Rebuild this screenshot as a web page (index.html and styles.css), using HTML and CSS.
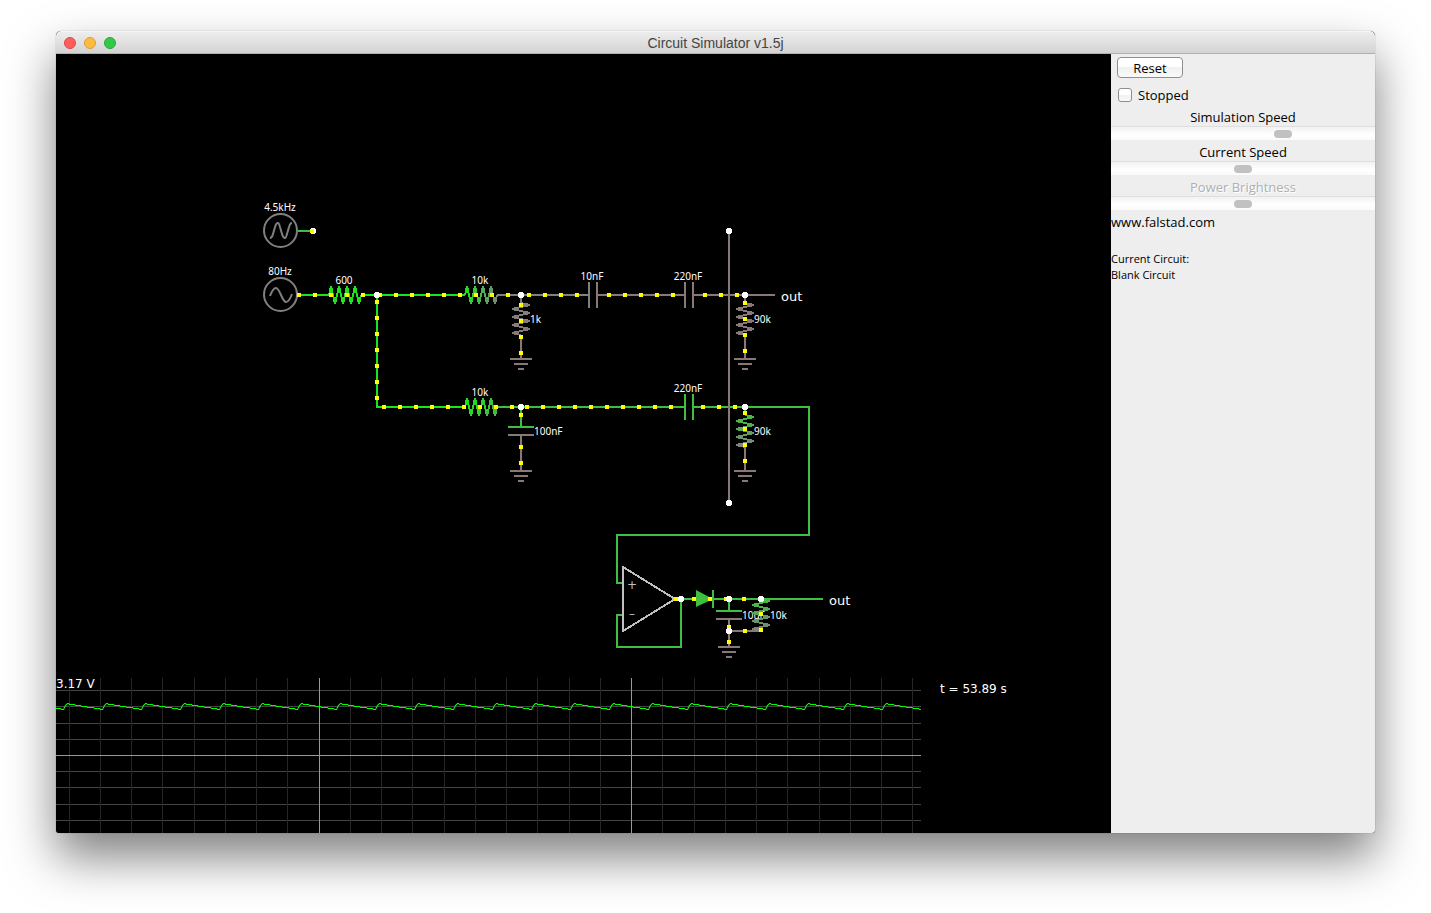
FILE: index.html
```html
<!DOCTYPE html>
<html lang="en">
  <head>
    <meta charset="UTF-8" />
    <meta name="viewport" content="width=device-width, initial-scale=1.0" />
    <title>Circuit Simulator v1.5j</title>
    <link rel="stylesheet" href="styles.css">
  </head>
  <body>
    <div class="window">
      <header class="titlebar">
        <div class="lights">
          <button class="light close" aria-label="Close"></button>
          <button class="light minimize" aria-label="Minimize"></button>
          <button class="light maximize" aria-label="Zoom"></button>
        </div>
        <h1>Circuit Simulator v1.5j</h1>
      </header>
      <main>
        <svg class="circuit" viewBox="56 54 1055 779" role="img" aria-label="Circuit">
          <defs>
            <path id="zigzag" d="M0 0L2 -9L6 9L10 -9L14 9L18 -9L22 9L26 -9L30 9L32 0" />
            <path id="ground" d="M-11 0H11M-7 5H7M-3 10H3" />
            <linearGradient id="fade1">
              <stop offset="0" stop-color="#1be41b" />
              <stop offset="1" stop-color="#7b857b" />
            </linearGradient>
            <linearGradient id="fade2">
              <stop offset="0" stop-color="#1be41b" />
              <stop offset="1" stop-color="#45ba45" />
            </linearGradient>
            <linearGradient id="fade3">
              <stop offset="0" stop-color="#808080" />
              <stop offset="1" stop-color="#8a7878" />
            </linearGradient>
            <linearGradient id="fade4">
              <stop offset="0" stop-color="#3fbf3f" />
              <stop offset="1" stop-color="#808080" />
            </linearGradient>
            <pattern id="ripple" x="56" y="678" width="39" height="155" patternUnits="userSpaceOnUse">
              <path class="trace" d="M0 30.5H5V31.5H8V29.5H9V27.5H10V26.5H11V25.5H13V26.5H19V27.5H25V28.5H31V29.5H38V30.5H39" />
            </pattern>
          </defs>

          <!-- wires -->
          <g class="wire bright">
            <path d="M298 295H329M361 295H465M377 295V407H465" />
          </g>
          <g class="wire green">
            <path d="M298 231H313M497 407H685M521 407V427M508 427H534M685 394V420M693 394V420" />
            <path d="M693 407H809V535H617V583H623M745 407V415" />
            <path d="M675 599H823M681 599V647H617V615H623M713 590V608M729 599V611M716 611H742" />
          </g>
          <g class="wire gray">
            <path d="M497 295H589M521 295V303M589 282V308" />
          </g>
          <g class="wire brown">
            <path d="M597 282V308M597 295H685M685 282V308M693 282V308M693 295H775M745 295V303" />
            <path d="M521 335V359M745 335V359M508 435H534M521 435V471M745 447V471M729 231V503" />
            <path d="M716 619H742M729 619V647M729 631H761" />
            <use href="#ground" x="521" y="359" />
            <use href="#ground" x="745" y="359" />
            <use href="#ground" x="521" y="471" />
            <use href="#ground" x="745" y="471" />
            <use href="#ground" x="729" y="647" />
          </g>

          <!-- component values -->
          <g class="value">
            <g text-anchor="middle">
              <text x="280" y="211">4.5kHz</text>
              <text x="280" y="275">80Hz</text>
              <text x="344" y="284">600</text>
              <text x="480" y="284">10k</text>
              <text x="592" y="280">10nF</text>
              <text x="688" y="280">220nF</text>
              <text x="480" y="396">10k</text>
              <text x="688" y="392">220nF</text>
            </g>
            <text x="530" y="323">1k</text>
            <text x="754" y="323">90k</text>
            <text x="534" y="435">100nF</text>
            <text x="754" y="435">90k</text>
            <text x="742" y="619">10uF</text>
            <text x="770" y="619">10k</text>
          </g>

          <!-- resistors -->
          <g class="resistor">
            <use href="#zigzag" transform="translate(329 295)" stroke="#1be41b" />
            <use href="#zigzag" transform="translate(465 295)" stroke="url(#fade1)" />
            <use href="#zigzag" transform="translate(465 407)" stroke="url(#fade2)" />
            <use href="#zigzag" transform="translate(521 303) rotate(90)" stroke="url(#fade3)" />
            <use href="#zigzag" transform="translate(745 303) rotate(90)" stroke="#8a7878" />
            <use href="#zigzag" transform="translate(745 415) rotate(90)" stroke="url(#fade4)" />
            <use href="#zigzag" transform="translate(761 599) rotate(90)" stroke="url(#fade4)" />
          </g>

          <!-- sources, op-amp, diode -->
          <g class="source">
            <circle cx="280.5" cy="230.5" r="16.5" />
            <path d="M270 238Q272 238 273 234L275 227Q276 223 278 223Q279 223 280 227L282 234Q283 238 285 238Q286 238 287 234L289 227Q290 223 292 223" />
            <circle cx="280.5" cy="294.5" r="16.5" />
            <path d="M270 296Q273 288 276 288Q278 288 281 295Q284 302 286 302Q289 302 292 294" />
          </g>
          <path class="opamp" d="M623 567L675 599L623 631Z" />
          <path class="diode" d="M696 590L713 599L696 607Z" />
          <g class="sign" text-anchor="middle">
            <text x="632" y="589">+</text>
            <text x="632" y="618">–</text>
          </g>

          <!-- moving charge -->
          <g class="charge">
            <path d="M297 295H365M378 295H462M474 295H510M527 295H579M607 295H675M703 295H739" />
            <path d="M377 300V404M382 407H514M525 407H673M701 407H737" />
            <path d="M521 303V355M521 413V417M521 445V465M745 301V353M745 411V463" />
            <path d="M674 599H678M692 599H712M724 599H728M742 599H746" />
            <path d="M761 612V632M743 631H747M729 625V629M729 640V644" />
          </g>

          <g class="node">
            <circle cx="313" cy="231" r="3" />
            <circle cx="377" cy="295" r="3" />
            <circle cx="521" cy="295" r="3" />
            <circle cx="745" cy="295" r="3" />
            <circle cx="521" cy="407" r="3" />
            <circle cx="745" cy="407" r="3" />
            <circle cx="729" cy="231" r="3" />
            <circle cx="729" cy="503" r="3" />
            <circle cx="681" cy="599" r="3" />
            <circle cx="729" cy="599" r="3" />
            <circle cx="761" cy="599" r="3" />
            <circle cx="729" cy="631" r="3" />
          </g>
          <path class="charge" d="M310 231H314" />

          <g class="output">
            <text x="781" y="301">out</text>
            <text x="829" y="605">out</text>
          </g>

          <!-- scope -->
          <g class="scope">
            <path class="row" d="M56 690.5H921M56 706.5H921M56 723.5H921M56 739.5H921M56 771.5H921M56 787.5H921M56 804.5H921M56 820.5H921" />
            <path class="column" d="M69.5 678V833M100.5 678V833M131.5 678V833M162.5 678V833M194.5 678V833M225.5 678V833M256.5 678V833M287.5 678V833M350.5 678V833M381.5 678V833M412.5 678V833M444.5 678V833M475.5 678V833M506.5 678V833M537.5 678V833M569.5 678V833M600.5 678V833M662.5 678V833M694.5 678V833M725.5 678V833M756.5 678V833M787.5 678V833M819.5 678V833M850.5 678V833M881.5 678V833M912.5 678V833" />
            <path class="axis" d="M56 755.5H921M319.5 678V833M631.5 678V833" />
            <rect x="56" y="678" width="865" height="155" fill="url(#ripple)" />
          </g>
          <g class="reading">
            <text x="56" y="688">3.17 V</text>
            <text x="940" y="693">t = 53.89 s</text>
          </g>
        </svg>

        <aside class="controls">
          <button class="reset">Reset</button>
          <label class="stopped"><input type="checkbox" />Stopped</label>
          <div class="slider">
            <label for="speed">Simulation Speed</label>
            <input type="range" id="speed" min="0" max="246" value="163" />
          </div>
          <div class="slider">
            <label for="current">Current Speed</label>
            <input type="range" id="current" min="0" max="100" value="50" />
          </div>
          <div class="slider">
            <label for="power" class="off">Power Brightness</label>
            <input type="range" id="power" min="0" max="100" value="50" disabled />
          </div>
          <a href="#">www.falstad.com</a>
          <p class="info">Current Circuit:<br />Blank Circuit</p>
        </aside>
      </main>
    </div>
  </body>
</html>
```

FILE: styles.css
```css
* {
  margin: 0;
  box-sizing: border-box;
}

body {
  min-height: 100vh;
  padding: 31px 56px 80px;
  display: flex;
  background-color: white;
  font-family: "Open Sans", "Noto Sans", sans-serif;
  font-size: 13px;
  color: black;
}

.window {
  flex: 1;
  display: flex;
  flex-direction: column;
  overflow: hidden;
  border-radius: 5px 5px 3px 3px;
  background-color: black;
  box-shadow: 0 0 1px rgba(0, 0, 0, 0.5), 0 24px 48px rgba(0, 0, 0, 0.5);
}

.titlebar {
  height: 23px;
  padding: 0 8px;
  display: grid;
  grid-template-columns: 1fr auto 1fr;
  align-items: center;
  background: linear-gradient(#ededed, #d3d3d3);
  border-top: 1px solid #f6f6f6;
  border-bottom: 1px solid #b0b0b0;
}

.titlebar h1 {
  font-family: "Liberation Sans", Arial, sans-serif;
  font-size: 14px;
  font-weight: 400;
  line-height: 20px;
  color: #444;
}

.lights {
  display: flex;
  gap: 8px;
}

.light {
  width: 12px;
  height: 12px;
  padding: 0;
  border: 1px solid;
  border-radius: 50%;
}

.close {
  background-color: #fd5f5a;
  border-color: #df4744;
}

.minimize {
  background-color: #fdbc40;
  border-color: #de9f34;
}

.maximize {
  background-color: #34c84a;
  border-color: #27a935;
}

main {
  flex: 1;
  display: flex;
}

.circuit {
  flex: 1;
  min-width: 0;
  align-self: flex-start;
  display: block;
  fill: none;
}

.circuit text {
  font-family: "Noto Sans", sans-serif;
  fill: white;
}

.circuit .value text {
  font-size: 10px;
}

.circuit .output text {
  font-family: "DejaVu Sans", sans-serif;
  font-size: 13px;
}

.circuit .reading text,
.circuit .sign text {
  font-family: "DejaVu Sans", sans-serif;
  font-size: 12px;
}

.circuit .sign text {
  fill: #c0c0c0;
}

.wire {
  stroke-width: 2;
  shape-rendering: crispEdges;
}

.bright {
  stroke: #1be41b;
}

.green {
  stroke: #3fbf3f;
}

.gray {
  stroke: #808080;
}

.brown {
  stroke: #8a7878;
}

.resistor {
  stroke-width: 2;
  stroke-linejoin: bevel;
  shape-rendering: crispEdges;
}

.source {
  stroke: #808080;
  stroke-width: 2;
}

.opamp {
  stroke: #c0c0c0;
  stroke-width: 2;
  shape-rendering: crispEdges;
}

.diode {
  fill: #3fbf3f;
}

.charge {
  stroke: yellow;
  stroke-width: 4;
  stroke-dasharray: 4 12;
  shape-rendering: crispEdges;
}

.node {
  fill: white;
  shape-rendering: crispEdges;
}

.scope {
  shape-rendering: crispEdges;
}

.row {
  stroke: #444;
}

.column {
  stroke: #262626;
}

.axis {
  stroke: #999;
}

.trace {
  stroke: #00ff00;
}

.controls {
  width: 264px;
  display: flex;
  flex-direction: column;
  background-color: #eee;
}

.reset {
  align-self: flex-start;
  width: 66px;
  height: 21px;
  margin: 3px 6px 6px;
  padding: 0;
  border: 1px solid #8e8e8e;
  border-radius: 4px;
  background: linear-gradient(white 50%, #f0f0f0 50%, #fafafa);
  font: inherit;
  line-height: 18px;
}

.stopped {
  height: 21px;
  margin-bottom: 2px;
  padding-left: 7px;
  display: flex;
  align-items: center;
  gap: 6px;
}

.stopped input {
  appearance: none;
  width: 14px;
  height: 14px;
  border: 1px solid #8e8e8e;
  border-radius: 3px;
  background: linear-gradient(white 50%, #f0f0f0 50%, #fafafa);
}

.slider {
  height: 35px;
  display: flex;
  flex-direction: column;
}

.slider label {
  padding-top: 2px;
  line-height: 17px;
  text-align: center;
}

.slider .off {
  color: #b0b0b0;
  text-shadow: 1px 1px white;
}

.slider input {
  appearance: none;
  width: 100%;
  height: 14px;
  margin: 0;
  border-top: 1px solid #dedede;
  background: linear-gradient(#f2f2f2, white 60%, #fafafa);
}

.slider input::-webkit-slider-thumb {
  appearance: none;
  width: 18px;
  height: 8px;
  border-radius: 4px;
  background-color: #c1c1c1;
}

.controls a {
  line-height: 20px;
  color: black;
  text-decoration: none;
}

.info {
  margin-top: 19px;
  font-size: 11px;
  line-height: 16px;
}
```
